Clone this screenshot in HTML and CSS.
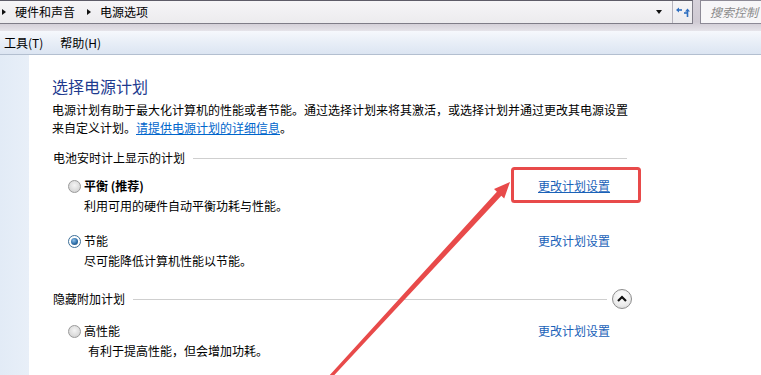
FILE: index.html
```html
<!DOCTYPE html>
<html lang="zh-CN">
<head>
<meta charset="utf-8">
<title>电源选项</title>
<link rel="stylesheet" href="styles.css">
</head>
<body>
<div class="addr-bar">
  <div class="addr-box">
    <span class="crumb-arrow"></span>
    <span class="crumb">硬件和声音</span>
    <span class="crumb-arrow"></span>
    <span class="crumb">电源选项</span>
    <span class="addr-fill"></span>
    <span class="drop"></span>
    <span class="refresh">
      <svg width="16" height="14" viewBox="0 0 16 14">
        <path d="M7 5 H2.5" stroke="#2f6fc0" stroke-width="1.6" fill="none"/>
        <path d="M1 5 L4 2.5 L4 7.5 Z" fill="#2f6fc0"/>
        <path d="M9 8 H13" stroke="#2f6fc0" stroke-width="1.6" fill="none"/>
        <path d="M12.5 5.5 L12.5 12" stroke="#2f6fc0" stroke-width="1.6" fill="none"/>
        <path d="M10 6.5 L12.5 3.5 L15 6.5 Z" fill="#2f6fc0"/>
      </svg>
    </span>
  </div>
  <div class="search-box">搜索控制</div>
</div>
<div class="menu-bar">
  <span class="menu-item">工具(T)</span>
  <span class="menu-item">帮助(H)</span>
</div>
<div class="main">
  <div class="sidebar"></div>
  <div class="content">
    <h1 class="title">选择电源计划</h1>
    <p class="intro">电源计划有助于最大化计算机的性能或者节能。通过选择计划来将其激活，或选择计划并通过更改其电源设置<br>来自定义计划。<a class="link" href="#">请提供电源计划的详细信息</a>。</p>

    <div class="section-head">
      <span>电池安时计上显示的计划</span>
      <span class="rule"></span>
    </div>

    <div class="plan">
      <div class="plan-name"><span class="radio"></span><b>平衡 (推荐)</b></div>
      <a class="plan-link" href="#">更改计划设置</a>
      <div class="plan-desc">利用可用的硬件自动平衡功耗与性能。</div>
    </div>

    <div class="plan plan-2">
      <div class="plan-name"><span class="radio radio-on"></span>节能</div>
      <a class="plan-link plain" href="#">更改计划设置</a>
      <div class="plan-desc">尽可能降低计算机性能以节能。</div>
    </div>

    <div class="section-head section-2">
      <span>隐藏附加计划</span>
      <span class="rule"></span>
      <span class="expand">
        <svg width="20" height="20" viewBox="0 0 20 20"><path d="M6 12 L10 8 L14 12" stroke="#111" stroke-width="2.2" fill="none"/></svg>
      </span>
    </div>

    <div class="plan plan-3">
      <div class="plan-name"><span class="radio"></span>高性能</div>
      <a class="plan-link plain" href="#">更改计划设置</a>
      <div class="plan-desc desc-indent">有利于提高性能，但会增加功耗。</div>
    </div>
  </div>
</div>

<svg class="annot" width="761" height="375" viewBox="0 0 761 375">
  <rect x="512.5" y="168.5" width="127" height="33" rx="2" fill="none" stroke="#e84a4a" stroke-width="3"/>
  <polygon points="328.9,376 496.9,191.7 494,188.9 510,182 504.2,198.5 501.3,195.7 331.6,378" fill="#e84a4a"/>
</svg>
</body>
</html>
```

FILE: styles.css
```css
* { box-sizing: border-box; }
html, body { margin: 0; padding: 0; }
body {
  width: 761px;
  height: 375px;
  overflow: hidden;
  position: relative;
  background: #fff;
  font-family: "Noto Sans CJK SC", "Noto Sans", sans-serif;
  font-size: 12px;
  color: #000;
}

.addr-bar {
  height: 31px;
  display: flex;
  align-items: flex-start;
  background: linear-gradient(to bottom, #d6d1da 0%, #cfcad3 70%, #e6e4ea 100%);
}
.addr-box {
  width: 693px;
  height: 24px;
  display: flex;
  align-items: center;
  border: 1px solid #7f7d88;
  border-left: none;
  border-top-color: #5e5c68;
  background: linear-gradient(to bottom, #f6f5f7, #ecebee);
}
.crumb-arrow {
  width: 0; height: 0;
  border-left: 4px solid #111;
  border-top: 3.5px solid transparent;
  border-bottom: 3.5px solid transparent;
  margin-left: 2px;
  margin-right: 9px;
}
.crumb { line-height: 16px; margin-right: 10px; font-size: 12px; }
.addr-fill { flex: 1; }
.drop {
  width: 0; height: 0;
  border-top: 4px solid #111;
  border-left: 3.5px solid transparent;
  border-right: 3.5px solid transparent;
  margin-right: 10px;
}
.refresh {
  width: 20px;
  height: 22px;
  border-left: 1px solid #b7b4bd;
  display: flex;
  align-items: center;
  justify-content: center;
}
.search-box {
  margin-left: 7px;
  flex: 1;
  height: 24px;
  border: 1px solid #8d8a96;
  border-right: none;
  background: #f7f6f8;
  color: #8a8a8a;
  font-style: italic;
  padding-left: 9px;
  line-height: 22px;
  white-space: nowrap;
  overflow: hidden;
}

.menu-bar {
  height: 24px;
  display: flex;
  align-items: center;
  gap: 17px;
  padding-left: 4px;
  background: linear-gradient(to bottom, #f6f8fc 0%, #e8eef7 50%, #dce5f2 100%);
  border-bottom: 1px solid #b3bfd0;
}
.menu-item { line-height: 16px; }

.main { display: flex; height: 320px; }
.sidebar {
  width: 29px;
  background: linear-gradient(to right, #e2ebf6, #e8eff8);
}
.content {
  flex: 1;
  padding-left: 23px;
}
.title {
  margin: 20px 0 0;
  font-size: 16px;
  line-height: 22px;
  font-weight: normal;
  color: #1e3a8f;
}
.intro {
  margin: 4px 0 0;
  line-height: 18px;
}
.link { color: #0066cc; text-decoration: underline; }

.section-head {
  width: 575px;
  margin-top: 12px;
  display: flex;
  align-items: center;
  gap: 8px;
  line-height: 18px;
  padding-left: 1px;
}
.rule { flex: 1; height: 1px; background: #cfcfcf; }
.section-2 { width: 580px; margin-top: 19px; }
.expand {
  width: 20px; height: 20px;
  border-radius: 50%;
  border: 1px solid #8d8d8d;
  background: radial-gradient(circle at 50% 35%, #ffffff 0%, #ececec 60%, #cfcfcf 100%);
  display: flex;
  margin-left: -3px;
}
.expand svg { margin: -1px; }

.plan {
  display: grid;
  grid-template-columns: 486px auto;
  margin-top: 10px;
}
.plan-2 { margin-top: 17px; }
.plan-3 { margin-top: 13px; }
.plan-name {
  display: flex;
  align-items: center;
  padding-left: 16px;
  line-height: 18px;
}
.plan-name b { font-weight: bold; }
.radio {
  width: 13px; height: 13px;
  border-radius: 50%;
  border: 1px solid #9a9a9a;
  background: radial-gradient(circle at 50% 40%, #f4f4f4 0%, #dcdcdc 60%, #c8c8c8 100%);
  margin-right: 3px;
  flex: none;
  position: relative;
}
.radio-on { border-color: #3d6f98; background: #fff; }
.radio-on::after {
  content: "";
  position: absolute;
  left: 2px; top: 2px;
  width: 7px; height: 7px;
  border-radius: 50%;
  background: radial-gradient(circle at 40% 35%, #8fc2ec 0%, #2d6ea8 55%, #18466f 100%);
}
.plan-link {
  color: #1a62b8;
  text-decoration: underline;
  line-height: 18px;
}
.plan-link.plain { text-decoration: none; }
.plan-desc {
  grid-column: 1 / 2;
  padding-left: 32px;
  line-height: 18px;
  margin-top: 2px;
}
.desc-indent { padding-left: 36px; }

.annot {
  position: absolute;
  left: 0; top: 0;
  pointer-events: none;
}
```
